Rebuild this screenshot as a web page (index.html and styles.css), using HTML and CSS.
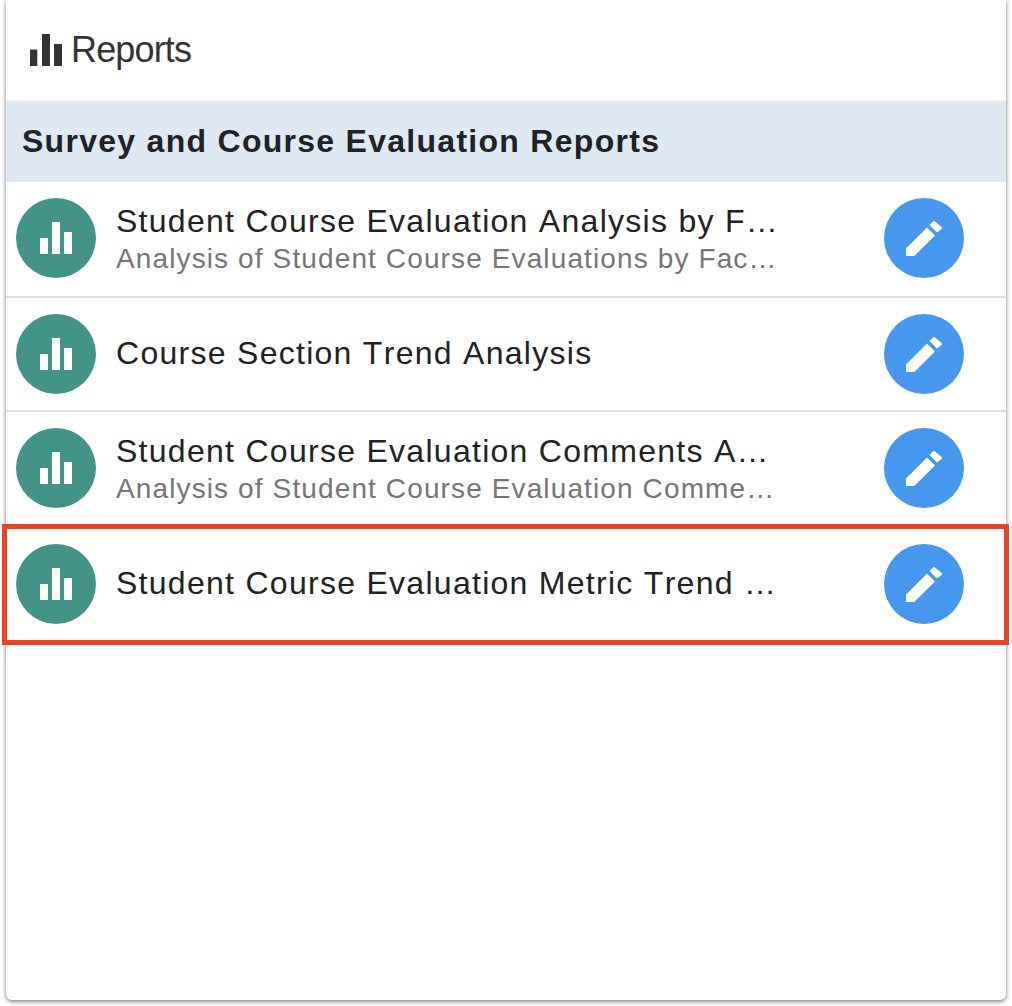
FILE: index.html
```html
<!DOCTYPE html>
<html lang="en">
<head>
<meta charset="utf-8">
<title>Reports</title>
<link rel="stylesheet" href="styles.css">
</head>
<body>
<main class="card">
  <header class="top">
    <svg class="top-icon" viewBox="0 0 32 32"><path d="M0 15.500h7.300V32H0zM12 0h8v32h-8zM24 10h8v22h-8z"/></svg>
    <h1 class="top-title">Reports</h1>
  </header>
  <h2 class="band">Survey and Course Evaluation Reports</h2>
  <ul class="list">
    <li class="row row-a">
      <span class="circle teal"><svg class="bars" viewBox="0 0 32 32"><path d="M0 16h8v16H0zM12 0h8v32h-8zM24 10h8v22h-8z"/></svg></span>
      <div class="text">
        <div class="title">Student Course Evaluation Analysis by Faculty Member Report</div>
        <div class="sub">Analysis of Student Course Evaluations by Faculty Member Report</div>
      </div>
      <span class="circle blue"><svg class="pencil" viewBox="0 0 37 36"><path d="M0 28.500 21 7.500 29 15.500 8.300 36H0zM23.500 5 27 1.500a1.500 1.500 0 0 1 2.100 0l6.500 5.500a1.500 1.500 0 0 1 0 2.100L31 12.500z"/></svg></span>
    </li>
    <li class="row row-b">
      <span class="circle teal"><svg class="bars" viewBox="0 0 32 32"><path d="M0 16h8v16H0zM12 0h8v32h-8zM24 10h8v22h-8z"/></svg></span>
      <div class="text">
        <div class="title">Course Section Trend Analysis</div>
      </div>
      <span class="circle blue"><svg class="pencil" viewBox="0 0 37 36"><path d="M0 28.500 21 7.500 29 15.500 8.300 36H0zM23.500 5 27 1.500a1.500 1.500 0 0 1 2.100 0l6.500 5.500a1.500 1.500 0 0 1 0 2.100L31 12.500z"/></svg></span>
    </li>
    <li class="row row-c">
      <span class="circle teal"><svg class="bars" viewBox="0 0 32 32"><path d="M0 16h8v16H0zM12 0h8v32h-8zM24 10h8v22h-8z"/></svg></span>
      <div class="text">
        <div class="title">Student Course Evaluation Comments Analysis Report</div>
        <div class="sub">Analysis of Student Course Evaluation Comments by Section</div>
      </div>
      <span class="circle blue"><svg class="pencil" viewBox="0 0 37 36"><path d="M0 28.500 21 7.500 29 15.500 8.300 36H0zM23.500 5 27 1.500a1.500 1.500 0 0 1 2.100 0l6.500 5.500a1.500 1.500 0 0 1 0 2.100L31 12.500z"/></svg></span>
    </li>
    <li class="row row-d">
      <span class="circle teal"><svg class="bars" viewBox="0 0 32 32"><path d="M0 16h8v16H0zM12 0h8v32h-8zM24 10h8v22h-8z"/></svg></span>
      <div class="text">
        <div class="title">Student Course Evaluation Metric Trend Analysis Report</div>
      </div>
      <span class="circle blue"><svg class="pencil" viewBox="0 0 37 36"><path d="M0 28.500 21 7.500 29 15.500 8.300 36H0zM23.500 5 27 1.500a1.500 1.500 0 0 1 2.100 0l6.500 5.500a1.500 1.500 0 0 1 0 2.100L31 12.500z"/></svg></span>
      <span class="highlight"></span>
    </li>
  </ul>
</main>
</body>
</html>
```

FILE: styles.css
```css
* { box-sizing: border-box; }

html, body { margin: 0; padding: 0; background: #fff; }

body {
  width: 1012px;
  height: 1006px;
  overflow: hidden;
  padding: 0 6px;
  font-family: "Liberation Sans", Arial, sans-serif;
}

.card {
  height: 1000px;
  background: #fff;
  border-radius: 0 0 6px 6px;
  box-shadow: 0 2px 4px rgba(0, 0, 0, .4), 0 0 4px rgba(0, 0, 0, .18);
}

.top {
  height: 102px;
  border-bottom: 2px solid #eeeeee;
  display: flex;
  align-items: center;
  padding: 0 0 0 24px;
  gap: 9px;
}

.top-icon { width: 32px; height: 32px; fill: #333; }

.top-title {
  margin: 0;
  font-size: 36px;
  font-weight: 400;
  letter-spacing: -.85px;
  color: #333;
}

.band {
  margin: 0;
  height: 80px;
  line-height: 78px;
  padding: 0 0 2px 16px;
  background: #dee9f3;
  font-size: 32px;
  font-weight: 700;
  letter-spacing: .04em;
  color: #1f2226;
}

.list { list-style: none; margin: 0; padding: 0; }

.row {
  position: relative;
  display: flex;
  align-items: center;
  padding: 0 42px 0 10px;
  border-bottom: 2px solid #e0e0e0;
}

.row-a { height: 116px; padding-bottom: 2px; }
.row-b { height: 114px; }
.row-c { height: 112px; border-bottom: 0; }
.row-d { height: 120px; border-bottom: 0; }

.circle {
  flex: none;
  width: 80px;
  height: 80px;
  border-radius: 50%;
  display: flex;
  align-items: center;
  justify-content: center;
}

.teal { background: #429488; }
.blue { background: #4698ee; }

.bars { width: 32px; height: 32px; fill: #fff; }
.pencil { width: 37px; height: 36px; fill: #fff; }

.text {
  flex: 1;
  min-width: 0;
  margin: 0 104px 0 20px;
  padding-bottom: 2px;
}

.title, .sub {
  white-space: nowrap;
  overflow: hidden;
  text-overflow: ellipsis;
  letter-spacing: .04em;
  font-kerning: none;
}

.title {
  font-size: 32px;
  line-height: 44px;
  color: #212121;
}

.sub {
  font-size: 28px;
  line-height: 32px;
  color: #757575;
}

.highlight {
  position: absolute;
  left: -4px;
  right: -3px;
  top: 0;
  bottom: -1px;
  border: 5px solid #f04124;
}
```
